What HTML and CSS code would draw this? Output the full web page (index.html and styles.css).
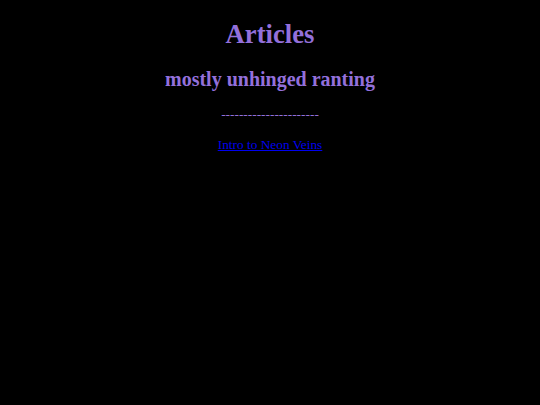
FILE: index.html
```html
<!DOCTYPE html>
<html>
<head>
<meta charset="utf-8">
<title>Articles</title>
<link rel="stylesheet" href="styles.css">
</head>
<body class="page">
<h1 class="title">Articles</h1>
<h2 class="subtitle">mostly unhinged ranting</h2>
<p class="divider">----------------------</p>
<p class="links"><a class="article-link" href="#">Intro to Neon Veins</a></p>
</body>
</html>
```
FILE: styles.css
```css
html, body {
  background: #000;
}
.page {
  margin: 0 8px 8px;
  padding-top: 0;
  font-family: "Liberation Serif", serif;
  font-size: 13.333px;
  color: #9370db;
  text-align: center;
}
.title {
  font-size: 2em;
  font-weight: bold;
  margin: 19px 0 0.67em;
}
.subtitle {
  font-size: 1.5em;
  font-weight: bold;
  margin: 0.83em 0;
}
.divider,
.links {
  margin: 1em 0;
}
.article-link {
  color: #0000ee;
}
```
